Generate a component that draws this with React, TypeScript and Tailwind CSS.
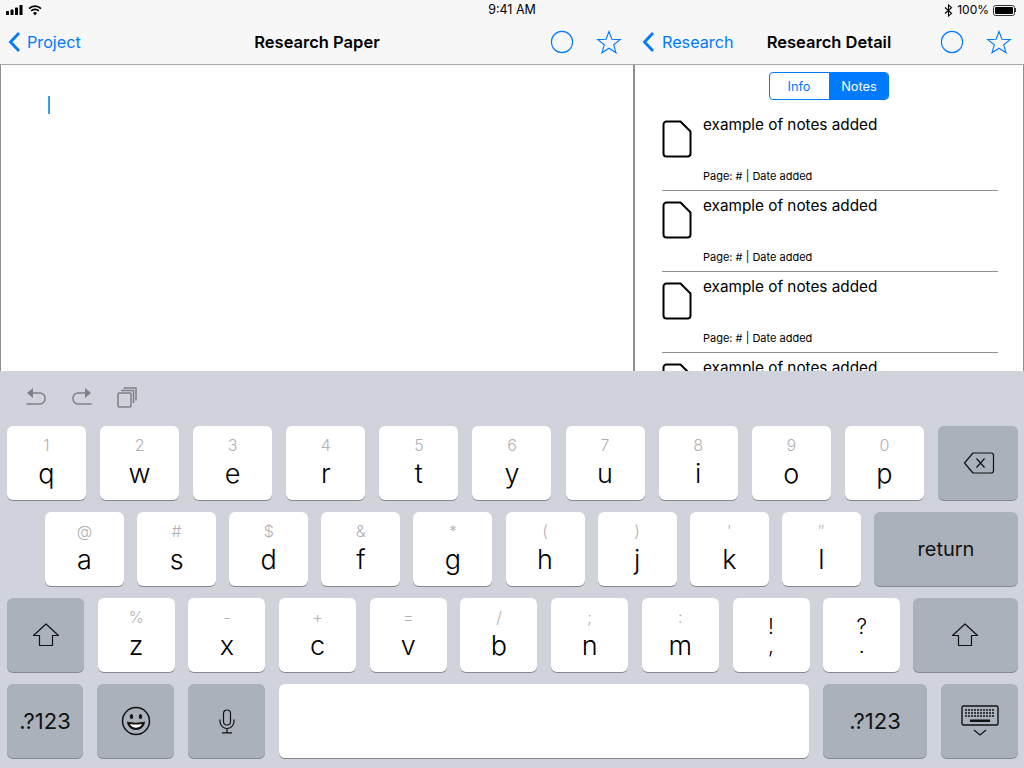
import type { ReactNode } from 'react';

const font = { fontFamily: 'Inter, "Liberation Sans", sans-serif' };

function Chevron() {
  return (
    <svg width="13" height="22" viewBox="0 0 13 22" className="shrink-0" fill="none">
      <path d="M11 2 2.500 11l8.500 9" stroke="#007aff" strokeWidth="2.800" />
    </svg>
  );
}

function Circle() {
  return (
    <svg width="24" height="24" viewBox="0 0 24 24" fill="none">
      <circle cx="12" cy="12" r="10.600" stroke="#007aff" strokeWidth="1.100" />
    </svg>
  );
}

function Star() {
  return (
    <svg width="26" height="24" viewBox="0 0 26 24" fill="none">
      <path d="M13 1.500 15.900 9.300 24.300 9.600 17.700 14.800 20 22.800 13 18.200 6 22.800 8.300 14.800 1.700 9.600 10.100 9.300Z" stroke="#007aff" strokeWidth="1.100" strokeLinejoin="miter" />
    </svg>
  );
}

function NavBar({ back, title, backGap }: { back: string; title: string; backGap: string }) {
  return (
    <div className="grid h-[44px] grid-cols-[1fr_auto_1fr] items-center">
      <div className={`flex items-center ${backGap} text-[16.200px] text-[#007aff]`}>
        <Chevron />
        <span>{back}</span>
      </div>
      <div className="text-[16.500px] font-semibold text-black">{title}</div>
      <div className="flex items-center justify-end gap-[22px] pr-[4px]">
        <Circle />
        <Star />
      </div>
    </div>
  );
}

function StatusBar() {
  return (
    <div className="relative flex h-[20px] items-center justify-between pl-[6px] pr-[8px] text-[12.500px] text-black">
      <div className="flex items-center gap-[4px]">
        <svg width="18" height="10" viewBox="0 0 18 10" fill="#000">
          <rect x="0" y="6" width="3" height="4" rx="0.600" />
          <rect x="4.500" y="4.500" width="3" height="5.500" rx="0.600" />
          <rect x="9" y="2.500" width="3" height="7.500" rx="0.600" />
          <rect x="13.500" y="0" width="3" height="10" rx="0.600" />
        </svg>
        <svg width="14" height="11" viewBox="0 0 14 11" fill="none" stroke="#000" strokeWidth="1.700">
          <path d="M1 3.600a8.500 8.500 0 0 1 12 0" />
          <path d="M3.200 5.900a5.300 5.300 0 0 1 7.600 0" />
          <path d="M7 10.500 5 8.100a2.800 2.800 0 0 1 4 0Z" fill="#000" stroke="none" />
        </svg>
      </div>
      <span className="absolute left-1/2 -translate-x-1/2">9:41 AM</span>
      <div className="flex items-center gap-[4px]">
        <svg width="9" height="13" viewBox="0 0 9 13" fill="none" stroke="#000" strokeWidth="1.100">
          <path d="M1 3.500 7.500 9.300 4.500 12V1l3 2.700L1 9.500" />
        </svg>
        <span className="text-[12px]">100%</span>
        <div className="flex items-center">
          <div className="h-[11px] w-[22px] rounded-[2.500px] border border-[#333] p-[1px]">
            <div className="h-full w-full rounded-[1px] bg-black" />
          </div>
          <div className="h-[4px] w-[1px] bg-[#333]" />
        </div>
      </div>
    </div>
  );
}

function NoteIcon() {
  return (
    <svg width="30" height="38" viewBox="0 0 30 38" className="shrink-0" fill="none">
      <path d="M4.500 1.500H18.500L28.500 11.500V33.500a3 3 0 0 1-3 3H4.500a3 3 0 0 1-3-3V4.500a3 3 0 0 1 3-3Z" stroke="#000" strokeWidth="2" strokeLinejoin="round" />
    </svg>
  );
}

function NoteRow() {
  return (
    <div className="flex h-[81px] shrink-0 gap-[11px] border-b border-[#8e8e8e] pt-[5px]">
      <div className="pt-[5px]">
        <NoteIcon />
      </div>
      <div className="flex flex-1 flex-col">
        <div className="text-[15.300px] leading-[20px] text-black">example of notes added</div>
        <div className="mt-[34px] text-[11px] leading-[14px] text-black">Page: # | Date added</div>
      </div>
    </div>
  );
}

function Key({ w, top, main, special, size = 'text-[27px]', children }: { w: string; top?: string; main?: string; special?: boolean; size?: string; children?: ReactNode }) {
  return (
    <div className={`relative flex h-[74px] shrink-0 flex-col items-center rounded-[6px] shadow-[0_1px_0_#85888e] ${w} ${top !== undefined ? 'justify-start pt-[9px]' : 'justify-center'} ${special ? 'bg-[#abb1bb]' : 'bg-white'}`}>
      {top !== undefined && (
        <>
          <div className="h-[20px] text-[16px] leading-[20px] font-light text-[#b0b0b4]">{top}</div>
          <div className="mt-[3px] text-[27px] leading-[32px] font-light text-black">{main}</div>
        </>
      )}
      {top === undefined && main !== undefined && <div className={`${size} text-[#111]`}>{main}</div>}
      {children}
    </div>
  );
}

function PuncKey({ a, b }: { a: string; b: string }) {
  return (
    <Key w="w-[77px]">
      <div className="flex flex-col items-center pt-[2px] text-[21px] leading-[19px] font-light text-black">
        <span>{a}</span>
        <span>{b}</span>
      </div>
    </Key>
  );
}

function ShiftIcon() {
  return (
    <svg width="28" height="26" viewBox="0 0 28 26" fill="none">
      <path d="M14 2 1.500 13.500H7.500V23.500H20.500V13.500H26.500Z" stroke="#111" strokeWidth="1.200" strokeLinejoin="round" />
    </svg>
  );
}

function Emoji() {
  return (
    <svg width="30" height="30" viewBox="0 0 30 30" fill="none">
      <circle cx="15" cy="15" r="13.500" stroke="#111" strokeWidth="1.500" />
      <ellipse cx="10.500" cy="10.500" rx="1.700" ry="2.500" fill="#111" />
      <ellipse cx="19.500" cy="10.500" rx="1.700" ry="2.500" fill="#111" />
      <path d="M6 15.500c5 1.500 13 1.500 18 0-.5 5.500-4.500 8.500-9 8.500s-8.500-3-9-8.500Z" fill="#111" />
      <path d="M9 18c4 .8 8 .8 12 0-1 2.500-3.500 3.800-6 3.800S10 20.500 9 18Z" fill="#fff" />
    </svg>
  );
}

function Mic() {
  return (
    <svg width="16" height="25" viewBox="0 0 16 25" fill="none" stroke="#111" strokeWidth="1.200">
      <rect x="4.500" y="1" width="7" height="15" rx="3.500" />
      <path d="M1 10.500v2a7 7 0 0 0 14 0v-2" />
      <path d="M8 19.500V23.500M3 23.800H13" />
    </svg>
  );
}

function KeyboardHide() {
  return (
    <svg width="38" height="32" viewBox="0 0 38 32" fill="none">
      <rect x="1" y="1" width="36" height="19" rx="1.500" stroke="#111" strokeWidth="1.400" />
      <path d="M4 5h30M4 8h30M4 11h30" stroke="#111" strokeWidth="1.700" strokeDasharray="2 1" />
      <rect x="9" y="14.500" width="20" height="2.500" fill="#111" />
      <path d="M13 25 19 30 25 25" stroke="#111" strokeWidth="1.200" />
    </svg>
  );
}

function Toolbar() {
  return (
    <div className="flex h-[55px] items-center gap-[24px] pb-[3px] pl-[25px]">
      <svg width="22" height="20" viewBox="0 0 22 20" fill="none" stroke="#7d8086" strokeWidth="1.500">
        <path d="M3 6h12a5 5 0 0 1 5 5v1a5 5 0 0 1-5 5H1.500" />
        <path d="M8 1 2 6l6 5" fill="#7d8086" stroke="none" />
      </svg>
      <svg width="22" height="20" viewBox="0 0 22 20" fill="none" stroke="#7d8086" strokeWidth="1.500">
        <path d="M19 6H7a5 5 0 0 0-5 5v1a5 5 0 0 0 5 5h13.500" />
        <path d="M14 1l6 5-6 5" fill="#7d8086" stroke="none" />
      </svg>
      <svg width="20" height="21" viewBox="0 0 20 21" fill="none" stroke="#7d8086" strokeWidth="1.500">
        <rect x="1" y="6" width="13" height="14" rx="1" />
        <path d="M4 3.500H16.500V16" />
        <path d="M6.500 1H19V13.500" />
      </svg>
    </div>
  );
}

function Keyboard() {
  const row1 = [['1', 'q'], ['2', 'w'], ['3', 'e'], ['4', 'r'], ['5', 't'], ['6', 'y'], ['7', 'u'], ['8', 'i'], ['9', 'o'], ['0', 'p']];
  const row2 = [['@', 'a'], ['#', 's'], ['$', 'd'], ['&', 'f'], ['*', 'g'], ['(', 'h'], [')', 'j'], ['′', 'k'], ['″', 'l']];
  const row3 = [['%', 'z'], ['-', 'x'], ['+', 'c'], ['=', 'v'], ['/', 'b'], [';', 'n'], [':', 'm']];

  return (
    <div className="flex flex-1 flex-col bg-[#d0d3dc]">
      <Toolbar />
      <div className="flex flex-col gap-[12px] px-[6px]">
        <div className="flex justify-between pl-[1px]">
          {row1.map(([t, m]) => (
            <Key key={m} w="w-[79px]" top={t} main={m} />
          ))}
          <Key w="w-[80px]" special>
            <svg width="34" height="24" viewBox="0 0 34 24" fill="none" stroke="#111" strokeWidth="1.200">
              <path d="M12 2H30a2.500 2.500 0 0 1 2.500 2.500V19.500A2.500 2.500 0 0 1 30 22H12L3.500 12Z" strokeLinejoin="round" />
              <path d="M15.500 7.500 23.500 16.500M23.500 7.500 15.500 16.500" />
            </svg>
          </Key>
        </div>
        <div className="flex justify-between pl-[39px]">
          {row2.map(([t, m]) => (
            <Key key={m} w="w-[79px]" top={t} main={m} />
          ))}
          <Key w="w-[144px]" special main="return" size="text-[20px]" />
        </div>
        <div className="flex gap-[13.700px] pl-[1px]">
          <Key w="w-[77px]" special>
            <ShiftIcon />
          </Key>
          {row3.map(([t, m]) => (
            <Key key={m} w="w-[77px]" top={t} main={m} />
          ))}
          <PuncKey a="!" b="," />
          <PuncKey a="?" b="." />
          <div className="-ml-[1px]">
            <Key w="w-[105px]" special>
              <ShiftIcon />
            </Key>
          </div>
        </div>
        <div className="flex justify-between pl-[1px]">
          <Key w="w-[76px]" special main=".?123" size="text-[22px]" />
          <Key w="w-[77px]" special>
            <Emoji />
          </Key>
          <Key w="w-[77px]" special>
            <Mic />
          </Key>
          <Key w="w-[530px]" />
          <Key w="w-[104px]" special main=".?123" size="text-[22px]" />
          <Key w="w-[77px]" special>
            <KeyboardHide />
          </Key>
        </div>
      </div>
    </div>
  );
}

export default function App() {
  return (
    <div className="flex h-[768px] w-[1024px] flex-col overflow-hidden bg-white" style={font}>
      <div className="bg-[#f7f7f7]">
        <StatusBar />
        <div className="flex border-b border-[#a8a8aa]">
          <div className="w-[634px] px-[8px]">
            <NavBar back="Project" title="Research Paper" backGap="gap-[6px]" />
          </div>
          <div className="w-[390px] px-[8px]">
            <NavBar back="Research" title="Research Detail" backGap="gap-[7px]" />
          </div>
        </div>
      </div>

      <div className="flex h-[306px] shrink-0 overflow-hidden">
        {/* editor */}
        <div className="w-[635px] shrink-0 border-r-2 border-l border-[#8e8e92] pt-[31px] pl-[47px]">
          <div className="h-[18px] w-[2px] bg-[#3a9fe8]" />
        </div>
        {/* notes */}
        <div className="flex flex-1 flex-col border-r border-[#8e8e92] pt-[7px] pr-[25px] pl-[27px]">
          <div className="flex justify-center pr-[2px]">
            <div className="flex h-[28px] w-[120px] overflow-hidden rounded-[4px] border border-[#007aff] text-[12.800px]">
              <div className="flex w-[59px] items-center justify-center pt-[2px] pr-[1px] text-[#007aff]">Info</div>
              <div className="flex flex-1 items-center justify-center bg-[#007aff] pt-[2px] pl-[1px] text-white">Notes</div>
            </div>
          </div>
          <div className="flex flex-col pt-[10px]">
            <NoteRow />
            <NoteRow />
            <NoteRow />
            <NoteRow />
          </div>
        </div>
      </div>

      <Keyboard />
    </div>
  );
}
